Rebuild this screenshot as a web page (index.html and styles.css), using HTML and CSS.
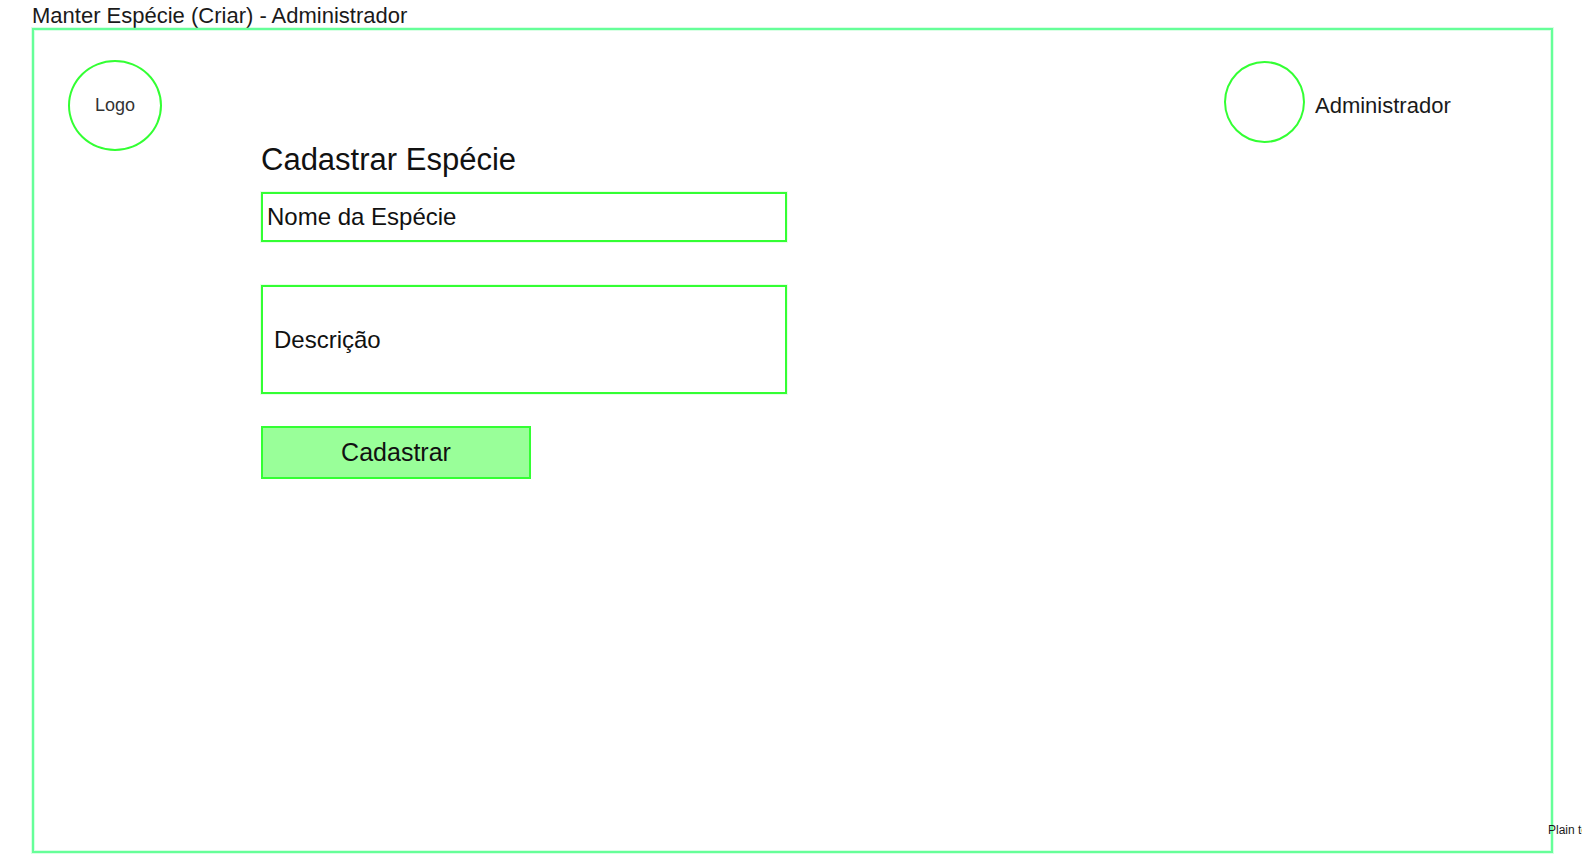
FILE: index.html
```html
<!DOCTYPE html>
<html lang="pt">
<head>
<meta charset="utf-8">
<title>Manter Espécie (Criar) - Administrador</title>
<link rel="stylesheet" href="styles.css">
</head>
<body>
<h1 class="page-title">Manter Espécie (Criar) - Administrador</h1>
<div class="frame">
  <div class="logo">Logo</div>
  <form class="form">
    <h2 class="form-title">Cadastrar Espécie</h2>
    <div class="field field-name">Nome da Espécie</div>
    <div class="field field-desc">Descrição</div>
    <div class="submit">Cadastrar</div>
  </form>
  <div class="user">
    <div class="avatar"></div>
    <span class="user-name">Administrador</span>
  </div>
  <span class="plain-text">Plain text</span>
</div>
</body>
</html>
```
FILE: styles.css
```css
html, body {
  margin: 0;
  height: 100%;
  overflow: hidden;
  background: #fff;
}
body {
  font-family: "Liberation Sans", Arial, sans-serif;
  color: #1a1a1a;
}
.page-title {
  margin: 0 0 0 32px;
  height: 28px;
  font-size: 22px;
  font-weight: 400;
  line-height: 31px;
}
.frame {
  position: relative;
  box-sizing: border-box;
  width: 1521px;
  height: 825px;
  margin-left: 32px;
  padding: 30px 0 0 34px;
  border: 2px solid #66ff99;
  box-shadow: 0 0 0 1px rgba(102, 255, 153, 0.25), inset 0 0 0 1px rgba(102, 255, 153, 0.25);
  display: grid;
  grid-template-columns: 94px 1fr 327px;
  column-gap: 99px;
  align-items: start;
}
.logo {
  box-sizing: border-box;
  width: 94px;
  height: 91px;
  border: 2px solid #33ff33;
  border-radius: 50%;
  display: flex;
  align-items: center;
  justify-content: center;
  font-size: 18px;
  color: #333;
}
.form {
  display: flex;
  flex-direction: column;
  align-items: flex-start;
  padding-top: 82px;
  color: #111;
}
.form-title {
  margin: 0 0 14px;
  font-size: 31px;
  font-weight: 400;
  line-height: 36px;
  height: 36px;
}
.field {
  box-sizing: border-box;
  width: 526px;
  border: 2px solid #33ff33;
  box-shadow: 0 0 0 1px rgba(51, 255, 51, 0.12);
  display: flex;
  align-items: center;
  font-size: 24px;
}
.field-name {
  height: 50px;
  padding-left: 4px;
  margin-bottom: 43px;
}
.field-desc {
  height: 109px;
  padding-left: 11px;
  margin-bottom: 32px;
}
.submit {
  box-sizing: border-box;
  width: 270px;
  height: 53px;
  border: 2px solid #33ff33;
  background: #99ff99;
  display: flex;
  align-items: center;
  justify-content: center;
  font-size: 25px;
}
.user {
  display: flex;
  align-items: flex-start;
  gap: 10px;
}
.avatar {
  box-sizing: border-box;
  flex: none;
  width: 81px;
  height: 82px;
  margin-top: 1px;
  border: 2px solid #33ff33;
  border-radius: 50%;
}
.user-name {
  font-size: 22px;
  line-height: 28px;
  margin-top: 32px;
  white-space: nowrap;
}
.plain-text {
  position: absolute;
  left: 1514px;
  top: 793px;
  font-size: 12px;
  white-space: nowrap;
}
```
